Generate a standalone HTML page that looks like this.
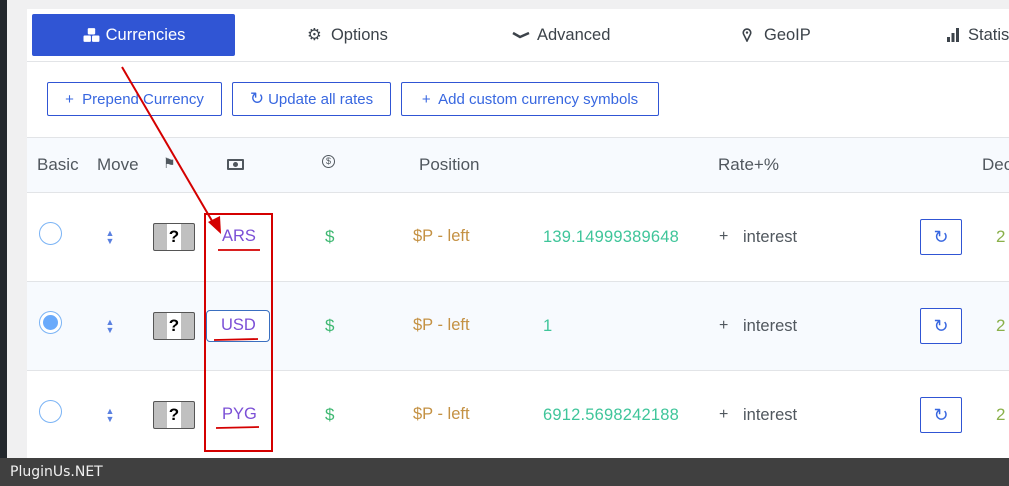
<!DOCTYPE html>
<html><head><style>
*{margin:0;padding:0;box-sizing:border-box}
body{width:1009px;height:486px;overflow:hidden;background:#f0f0f1;font-family:"Liberation Sans",sans-serif;position:relative}
.abs{position:absolute}
.lstrip{left:0;top:0;width:7px;height:486px;background:#23282d}
.card{left:27px;top:9px;width:982px;height:449px;background:#fff}
.tab{top:14px;height:42px;font-size:16px;color:#3c434a;display:flex;align-items:center}
.sep{left:27px;width:982px;height:1px;background:#e2e4e7}
.btn{top:82px;height:34px;border:1px solid #3055d4;border-radius:2px;color:#3867e0;font-size:15px;display:flex;align-items:center;justify-content:center}
.hdr{left:27px;top:137px;width:982px;height:55px;background:#f7fafe}
.h{top:155px;font-size:17px;color:#50575e}
.row2{left:27px;top:281px;width:982px;height:89px;background:#f7fafe}
.radio{left:39px;width:23px;height:23px;border:1px solid #7ab3f5;border-radius:50%;background:#fff}
.flag{left:153px;width:42px;height:28px;background:#c0c0c0;border:1px solid #555;border-radius:2px}
.flag i{position:absolute;left:13px;top:0;width:14px;height:26px;background:#fff;font-style:normal;font-weight:bold;font-size:17px;text-align:center;line-height:26px;color:#000}
.arr{left:105px;width:10px;font-size:9px;color:#5a80e0;line-height:8px;text-align:center}
.code{font-size:16.5px;color:#7b4fd6}
.dol{left:325px;font-size:17px;color:#3fb872}
.pos{left:413px;font-size:16.5px;color:#c49143}
.rate{left:543px;font-size:16.5px;color:#3fc59a;letter-spacing:0.2px}
.plus{left:719px;font-size:16px;color:#50575e}
.int{left:743px;font-size:16.5px;color:#50575e}
.rb{left:920px;width:42px;height:36px;border:1px solid #3055d4;border-radius:2px;background:#fff;color:#3867e0;font-size:18px;display:flex;align-items:center;justify-content:center}
.dec{left:996px;font-size:17px;color:#8ab04a}
.foot{left:0;top:458px;width:1009px;height:28px;background:#404040;color:#f0f0f0;font-family:"DejaVu Sans",sans-serif;font-size:14px;padding:6px 0 0 10px}
</style></head><body>
<div class="abs lstrip"></div>
<div class="abs card"></div>
<div class="abs" style="left:32px;top:14px;width:203px;height:42px;background:#3055d4;border-radius:2px;color:#fff;font-size:16.5px;display:flex;align-items:center;justify-content:center">
<svg width="20" height="17" viewBox="0 0 18 16" style="margin-right:4px"><g fill="#fff"><rect x="5" y="1" width="7" height="6" rx="1"/><rect x="1" y="8" width="7" height="6" rx="1"/><rect x="9" y="8" width="7" height="6" rx="1"/></g></svg>Currencies</div>
<div class="abs tab" style="left:307px;font-size:16.5px">⚙&nbsp; Options</div>
<div class="abs tab" style="left:512px;font-size:16.5px"><svg width="18" height="8" viewBox="0 0 18 8" style="margin-right:7px"><path d="M1 2 L8 6 L17 2" stroke="#3c434a" stroke-width="2.5" fill="none"/></svg>Advanced</div>
<div class="abs tab" style="left:742px;font-size:16.5px"><svg width="10" height="14" viewBox="0 0 10 14" style="margin-right:12px"><path d="M5 13 L1.5 6 A3.7 3.7 0 1 1 8.5 6 Z" stroke="#3c434a" stroke-width="1.6" fill="none"/><circle cx="5" cy="4.6" r="1.2" fill="#3c434a"/></svg>GeoIP</div>
<div class="abs tab" style="left:946px;font-size:16.5px"><svg width="14" height="14" viewBox="0 0 14 14" style="margin-right:8px"><rect x="1" y="9" width="3" height="5" fill="#3c434a"/><rect x="5.5" y="5" width="3" height="9" fill="#3c434a"/><rect x="10" y="0" width="3" height="14" fill="#3c434a"/></svg>Statis</div>
<div class="abs sep" style="top:61px"></div>
<div class="abs btn" style="left:47px;width:175px">+&nbsp; Prepend Currency</div>
<div class="abs btn" style="left:232px;width:159px"><span style="font-size:17px;margin-right:4px">↻</span>Update all rates</div>
<div class="abs btn" style="left:401px;width:258px">+&nbsp; Add custom currency symbols</div>
<div class="abs hdr"></div>
<div class="abs sep" style="top:137px"></div>
<div class="abs sep" style="top:192px"></div>
<div class="abs h" style="left:37px">Basic</div>
<div class="abs h" style="left:97px">Move</div>
<div class="abs h" style="left:163px;font-size:14px">⚑</div>
<div class="abs" style="left:227px;top:159px;width:17px;height:11px;border:2px solid #50575e;border-radius:1px"><div style="margin:1px auto;width:5px;height:5px;background:#50575e;border-radius:50%"></div></div>
<div class="abs" style="left:322px;top:155px;width:13px;height:13px;border:1.5px solid #50575e;border-radius:50%;font-size:9px;text-align:center;line-height:10px;color:#50575e">$</div>
<div class="abs h" style="left:419px">Position</div>
<div class="abs h" style="left:718px">Rate+%</div>
<div class="abs h" style="left:982px">Dec</div>
<div class="abs row2"></div>
<div class="abs sep" style="top:281px"></div>
<div class="abs sep" style="top:370px"></div>

<div class="abs radio" style="top:222px"></div>
<div class="abs radio" style="top:311px"><div style="margin:3px;width:15px;height:15px;border-radius:50%;background:#6aaafb"></div></div>
<div class="abs radio" style="top:400px"></div>
<div class="abs arr" style="top:229px">▲<br>▼</div>
<div class="abs arr" style="top:318px">▲<br>▼</div>
<div class="abs arr" style="top:407px">▲<br>▼</div>
<div class="abs flag" style="top:223px"><i>?</i></div>
<div class="abs flag" style="top:312px"><i>?</i></div>
<div class="abs flag" style="top:401px"><i>?</i></div>
<div class="abs code" style="left:222px;top:227px">ARS</div>
<div class="abs" style="left:206px;top:310px;width:64px;height:32px;border:1px solid #3a6fc0;border-radius:4px;background:#fff"></div>
<div class="abs code" style="left:221px;top:316px">USD</div>
<div class="abs code" style="left:222px;top:405px">PYG</div>
<div class="abs dol" style="top:227px">$</div><div class="abs dol" style="top:316px">$</div><div class="abs dol" style="top:405px">$</div>
<div class="abs pos" style="top:227px">$P - left</div><div class="abs pos" style="top:316px">$P - left</div><div class="abs pos" style="top:405px">$P - left</div>
<div class="abs rate" style="top:228px">139.14999389648</div><div class="abs rate" style="top:317px">1</div><div class="abs rate" style="top:406px">6912.5698242188</div>
<div class="abs plus" style="top:228px">+</div><div class="abs plus" style="top:317px">+</div><div class="abs plus" style="top:406px">+</div>
<div class="abs int" style="top:228px">interest</div><div class="abs int" style="top:317px">interest</div><div class="abs int" style="top:406px">interest</div>
<div class="abs rb" style="top:219px">↻</div><div class="abs rb" style="top:308px">↻</div><div class="abs rb" style="top:397px">↻</div>
<div class="abs dec" style="top:227px">2</div><div class="abs dec" style="top:316px">2</div><div class="abs dec" style="top:405px">2</div>

<svg class="abs" style="left:0;top:0" width="1009" height="486">
<g stroke="#d40000" stroke-width="2" fill="none">
<rect x="205" y="214" width="67" height="237"/>
<line x1="122" y1="67" x2="215" y2="226"/>
<path d="M218 250 L260 250 M214 340 L258 339 M216 428 L259 427" stroke-width="1.8"/>
</g>
<polygon points="221,234 208,222 220,216" fill="#d40000"/>
</svg>
<div class="abs foot">PluginUs.NET</div>
</body></html>
